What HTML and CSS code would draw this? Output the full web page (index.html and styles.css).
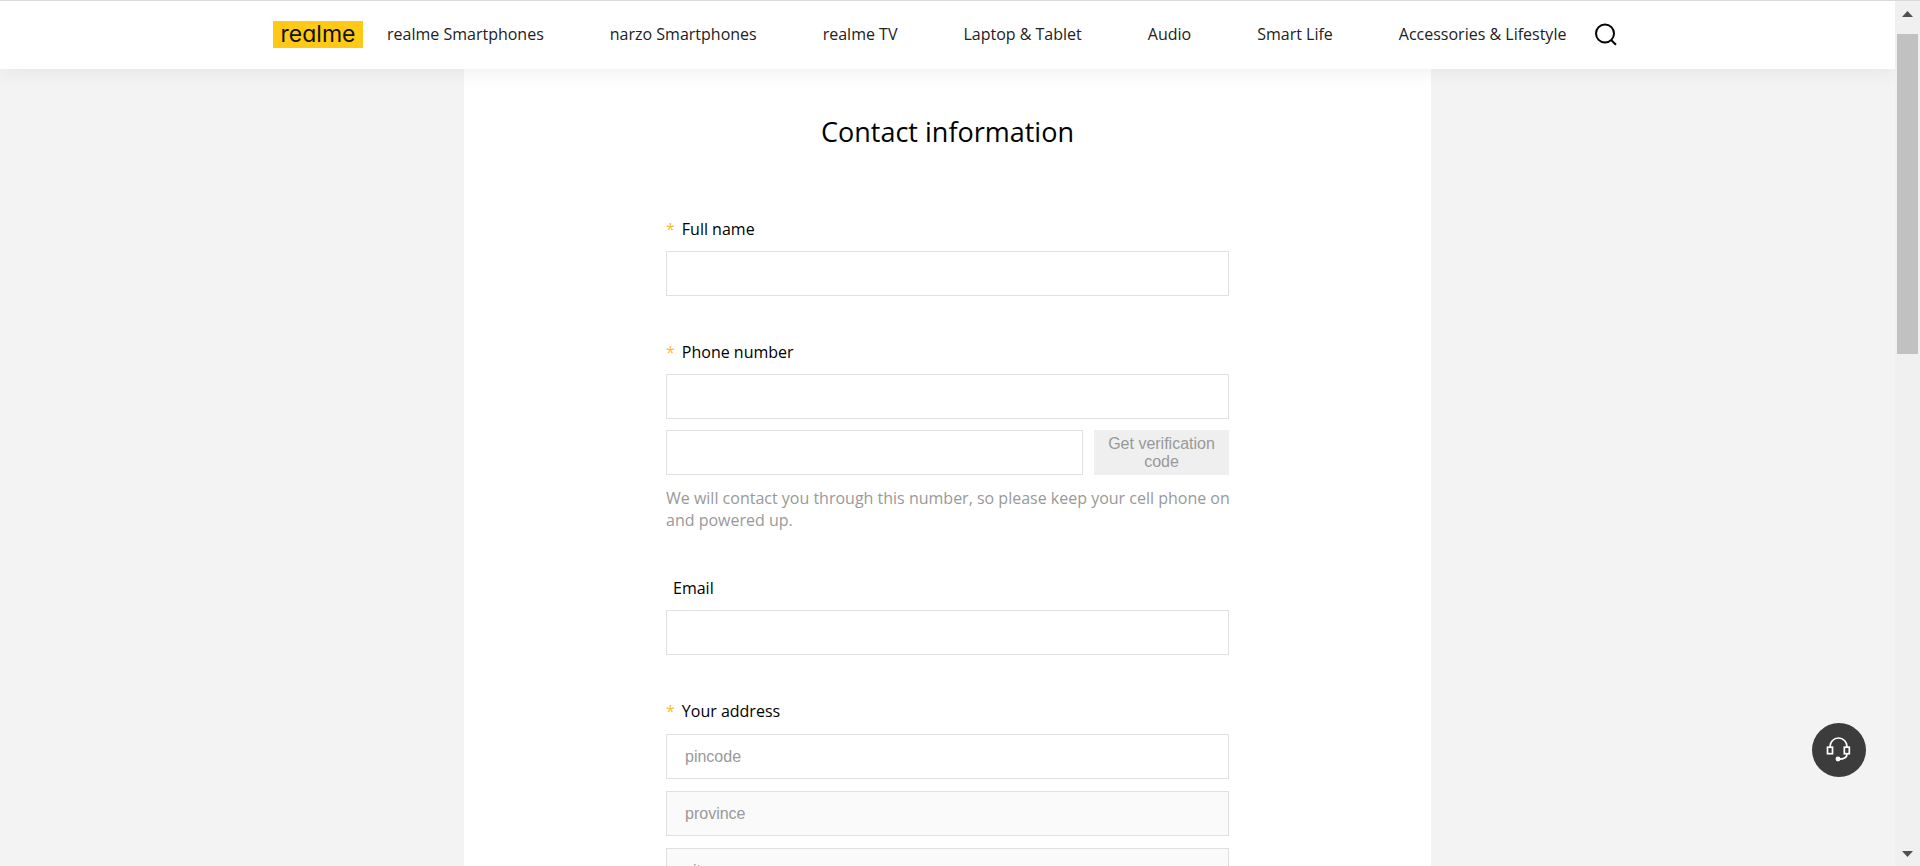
FILE: index.html
```html
<!DOCTYPE html>
<html lang="en">
<head>
<meta charset="utf-8">
<title>Contact information</title>
<link rel="stylesheet" href="styles.css">
</head>
<body>
<div class="window">
  <div class="page">
    <header class="header">
      <div class="header-inner">
        <a class="logo" href="#">realme</a>
        <nav class="nav">
          <a href="#">realme Smartphones</a>
          <a href="#">narzo Smartphones</a>
          <a href="#">realme TV</a>
          <a href="#">Laptop &amp; Tablet</a>
          <a href="#">Audio</a>
          <a href="#">Smart Life</a>
          <a href="#">Accessories &amp; Lifestyle</a>
        </nav>
        <button class="search" type="button" aria-label="Search">
          <svg width="24" height="24" viewBox="0 0 24 24" fill="none" stroke="#000" stroke-width="2"><circle cx="11" cy="11.500" r="9"/><path d="M16.800 17.700L22 22.700"/></svg>
        </button>
      </div>
    </header>
    <main class="panel">
      <h1 class="title">Contact information</h1>
      <form class="form">
        <div class="group">
          <label class="label" for="name"><span class="star">*</span>Full name</label>
          <input class="field" id="name" type="text">
        </div>
        <div class="group">
          <label class="label" for="phone"><span class="star">*</span>Phone number</label>
          <input class="field" id="phone" type="tel">
          <div class="code-row">
            <input class="field" type="text" aria-label="Verification code">
            <button class="code-button" type="button" disabled>Get verification code</button>
          </div>
          <p class="help">We will contact you through this number, so please keep your cell phone on and powered up.</p>
        </div>
        <div class="group">
          <label class="label label-optional" for="email">Email</label>
          <input class="field" id="email" type="email">
        </div>
        <div class="group group-address">
          <label class="label" for="pincode"><span class="star">*</span>Your address</label>
          <input class="field" id="pincode" type="text" placeholder="pincode">
          <input class="field" type="text" placeholder="province" aria-label="province" disabled>
          <input class="field" type="text" placeholder="city" aria-label="city" disabled>
        </div>
      </form>
    </main>
    <button class="support" type="button" aria-label="Customer support">
      <svg width="26" height="26" viewBox="0 0 26 26" fill="none" stroke="#fff" stroke-width="1.700"><path d="M4 10V9.500a8.500 8.500 0 0 1 17 0v.5"/><rect x="1.500" y="10.200" width="5" height="6.500"/><rect x="18.300" y="10.200" width="5" height="6.500"/><path d="M21 17c0 3.500-3 5.200-8.600 5.200"/><circle cx="12" cy="22" r="1.600" fill="#fff"/></svg>
    </button>
  </div>
  <div class="scrollbar">
    <svg class="arrow" width="11" height="6" viewBox="0 0 11 6"><path d="M0 6L5.500 0L11 6z" fill="#505050"/></svg>
    <div class="track"><div class="thumb"></div></div>
    <svg class="arrow" width="11" height="6" viewBox="0 0 11 6"><path d="M0 0H11L5.500 6z" fill="#505050"/></svg>
  </div>
</div>
</body>
</html>
```
FILE: styles.css
```css
* { box-sizing: border-box; }
body { margin: 0; font: 16px/22px "Open Sans", sans-serif; color: #000; }
a { color: inherit; text-decoration: none; }
button, input { font: 16px/18px "Liberation Sans", Arial, sans-serif; }
.window { display: flex; height: 100vh; overflow: hidden; border-top: 1px solid #d9d9d9; }
.page { flex: 1; display: flex; flex-direction: column; background: #f3f3f3; overflow: hidden; }
.header { position: relative; z-index: 1; flex: none; background: #fff; box-shadow: 0 0 24px rgba(0, 0, 0, 0.08); }
.header-inner { display: flex; align-items: center; max-width: 1349px; height: 68px; margin: 0 auto; padding-bottom: 2px; }
.logo { width: 90px; height: 27px; background: #ffc915; color: #111; font: 400 23px/26px Inter, sans-serif; font-feature-settings: "cv11"; text-align: center; }
.nav { display: flex; gap: 66px; margin-left: 24px; color: #222; white-space: nowrap; }
.search { display: flex; margin-left: 28px; padding: 0; border: 0; background: none; }
.panel { flex: 1; width: 51%; margin: 0 auto; padding-top: 43px; background: #fff; }
.title { margin: 0 0 66px; font-size: 27px; line-height: 40px; font-weight: 400; text-align: center; }
.form { display: flex; flex-direction: column; gap: 45px; max-width: 563px; margin: 0 auto; }
.group { display: flex; flex-direction: column; gap: 11px; }
.group-address { gap: 12px; }
.label { display: flex; gap: 7px; }
.label-optional { padding-left: 7px; }
.star { color: #fdb933; }
.field { width: 100%; height: 45px; padding: 0 18px; border: 1px solid #e0e0e0; border-radius: 0; background: #fff; }
.field::placeholder { color: #999; }
.field:disabled { background: #fafafa; }
.code-row { display: flex; gap: 11px; }
.code-row .field { flex: 1; min-width: 0; }
.code-button { width: 135px; height: 45px; padding: 0 12px; border: 0; background: #efefef; color: #999; }
.help { margin: 0 -12px 0 0; padding: 1px 0; color: #999; }
.support { position: fixed; right: 54px; bottom: 89px; display: flex; align-items: center; justify-content: center; width: 54px; height: 54px; padding: 0; border: 0; border-radius: 50%; background: #3c3c3c; }
.scrollbar { position: relative; z-index: 2; display: flex; flex-direction: column; align-items: center; gap: 17px; width: 25px; padding: 10px 0 9px; background: #f0f0f0; }
.arrow { flex: none; }
.track { flex: 1; width: 21px; }
.thumb { height: 40%; background: #c1c1c1; }
```
